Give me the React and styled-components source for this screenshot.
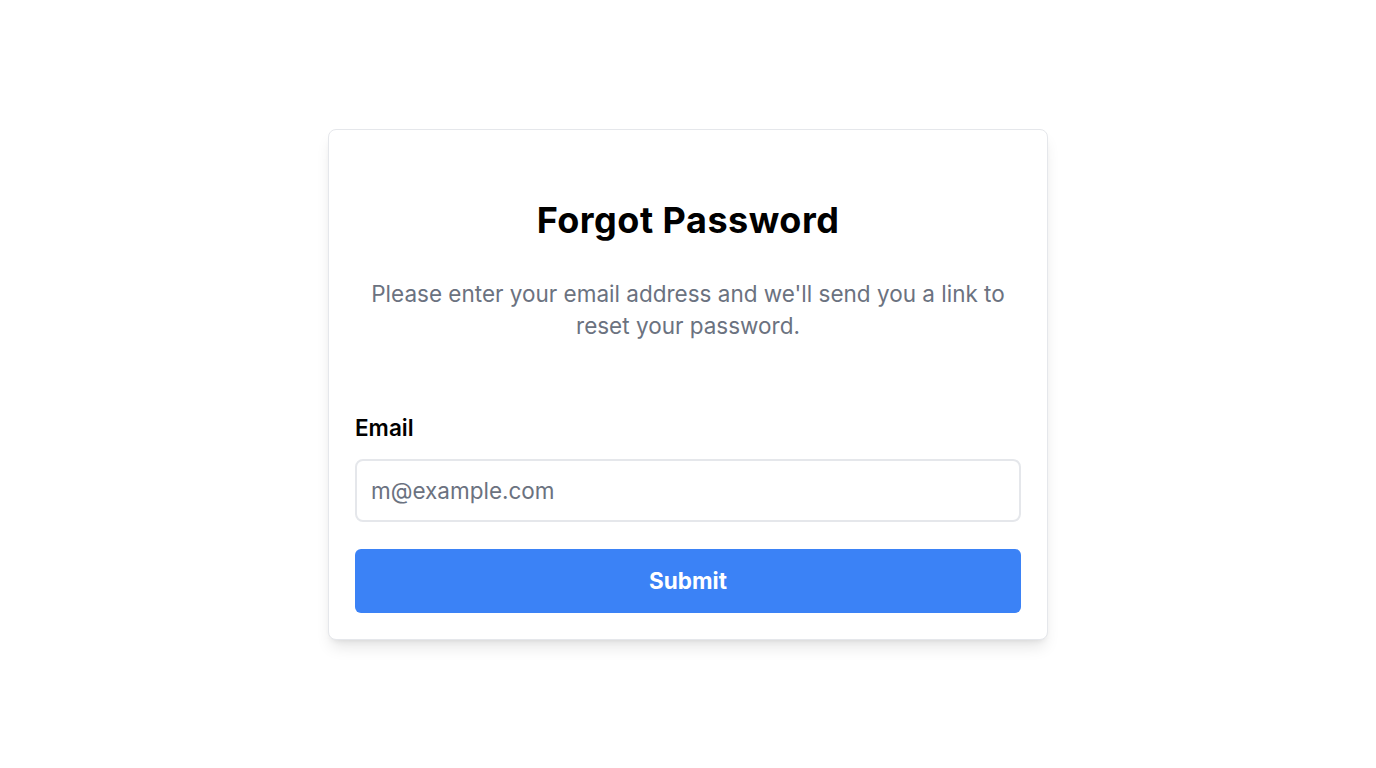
import React from 'react';
import styled, { createGlobalStyle } from 'styled-components';

// 비밀번호 찾기 화면

const GlobalStyle = createGlobalStyle`
  html, body {
    margin: 0;
    padding: 0;
    background: #ffffff;
    font-family: Inter, "Noto Sans", sans-serif;
  }
  * {
    box-sizing: border-box;
  }
`;

const App = () => {
  return (
    <React.Fragment>
      <GlobalStyle />
      <Page>
        <Card>
          <Title>Forgot Password</Title>
          <Desc>
            Please enter your email address and we'll send you a link to reset your password.
          </Desc>
          <Form onSubmit={(e) => e.preventDefault()}>
            <Label htmlFor="email">Email</Label>
            <Input id="email" type="email" placeholder="m@example.com" />
            <Button type="submit">Submit</Button>
          </Form>
        </Card>
      </Page>
    </React.Fragment>
  );
};

const Page = styled.div`
  width: 100%;
  height: 768px;
  display: flex;
  align-items: center;
  justify-content: center;
`;

const Card = styled.div`
  width: 720px;
  padding: 69px 26px 26px;
  background: #fff;
  border: 1px solid #e5e7eb;
  border-radius: 8px;
  box-shadow: 0 10px 15px -3px rgba(0, 0, 0, 0.1), 0 4px 6px -4px rgba(0, 0, 0, 0.1);
`;

const Title = styled.h1`
  margin: 0;
  font-size: 36px;
  line-height: 42px;
  font-weight: 700;
  text-align: center;
  color: #000;
  letter-spacing: 0.5px;
`;

const Desc = styled.p`
  margin: 37px 0 0;
  padding: 0 12px;
  font-size: 22.5px;
  line-height: 32px;
  text-align: center;
  color: #6b7280;
`;

const Form = styled.form`
  margin-top: 72px;
  display: flex;
  flex-direction: column;
`;

const Label = styled.label`
  font-size: 22.5px;
  line-height: 28px;
  font-weight: 600;
  color: #000;
`;

const Input = styled.input`
  margin-top: 17px;
  height: 63px;
  width: 100%;
  padding: 0 14px;
  font-family: inherit;
  font-size: 22.5px;
  color: #111827;
  border: 2px solid #e5e7eb;
  border-radius: 8px;
  outline: none;

  &::placeholder {
    color: #6b7280;
  }
`;

const Button = styled.button`
  margin-top: 27px;
  height: 64px;
  width: 100%;
  border: none;
  border-radius: 6px;
  background: #3b82f6;
  color: #fff;
  font-family: inherit;
  font-size: 22.5px;
  font-weight: 700;
  cursor: pointer;
`;

export default App;
